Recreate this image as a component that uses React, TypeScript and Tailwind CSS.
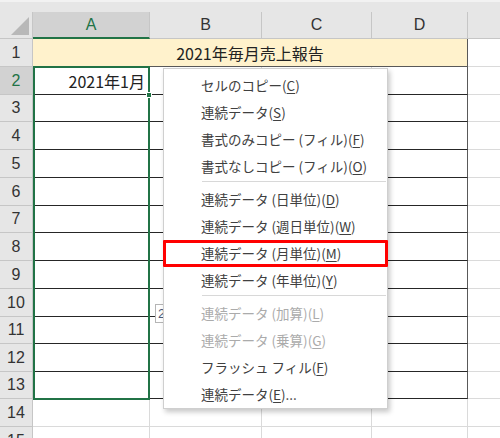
import React from "react";

const cols = [
  { label: "A", w: "w-[117px]" },
  { label: "B", w: "w-[112px]" },
  { label: "C", w: "w-[110px]" },
  { label: "D", w: "w-[96px]" },
  { label: "", w: "w-[65px]" },
];

// row heights as Excel draws them at 100% zoom
const rowHeights = [28, 28, 27, 28, 28, 28, 27, 28, 28, 28, 27, 28, 27, 28, 28];

type MenuEntry =
  | { kind: "sep" }
  | { kind: "item"; text: string; key: string; tail?: string; disabled?: boolean; marked?: boolean };

const menu: MenuEntry[] = [
  { kind: "item", text: "セルのコピー", key: "C" },
  { kind: "item", text: "連続データ", key: "S" },
  { kind: "item", text: "書式のみコピー (フィル)", key: "F" },
  { kind: "item", text: "書式なしコピー (フィル)", key: "O" },
  { kind: "sep" },
  { kind: "item", text: "連続データ (日単位)", key: "D" },
  { kind: "item", text: "連続データ (週日単位)", key: "W" },
  { kind: "item", text: "連続データ (月単位)", key: "M", marked: true },
  { kind: "item", text: "連続データ (年単位)", key: "Y" },
  { kind: "sep" },
  { kind: "item", text: "連続データ (加算)", key: "L", disabled: true },
  { kind: "item", text: "連続データ (乗算)", key: "G", disabled: true },
  { kind: "item", text: "フラッシュ フィル", key: "F" },
  { kind: "item", text: "連続データ", key: "E", tail: "..." },
];

const RowHeader = ({ n, h, active }: { n: number; h: number; active: boolean }) => (
  <div
    style={{ height: h }}
    className={`w-[33px] shrink-0 flex items-center justify-center border-r border-b border-[#c6c6c6] text-[16px] ${
      active ? "bg-[#d2d2d2] text-[#217346]" : "bg-[#e6e6e6] text-[#333]"
    }`}
  >
    {n}
  </div>
);

const SheetRow = ({ r, h }: { r: number; h: number }) => {
  if (r === 1) {
    return (
      <div className="flex">
        <RowHeader n={r} h={h} active={false} />
        <div
          style={{ height: h }}
          className="w-[435px] shrink-0 flex items-center justify-center bg-[#fff2cc] border-r border-b border-[#595959] text-[16px] text-[#222] font-['Noto_Sans_CJK_JP',sans-serif]"
        >
          2021年毎月売上報告
        </div>
        <div style={{ height: h }} className="w-[65px] shrink-0 border-b border-[#dadada]" />
      </div>
    );
  }
  const inTable = r >= 2 && r <= 13;
  return (
    <div className="flex">
      <RowHeader n={r} h={h} active={r === 2} />
      {cols.map((c, i) => {
        let cls = "border-r border-b border-[#dadada]";
        if (inTable && i < 4) {
          cls = `border-b border-b-[#262626] border-r ${i === 3 ? "border-r-[#595959]" : "border-r-[#dadada]"}`;
        }
        return (
          <div
            key={c.label + i}
            style={{ height: h }}
            className={`${c.w} shrink-0 flex items-center justify-end pr-[4px] ${cls}`}
          >
            {r === 2 && i === 0 && (
              <span className="text-[16px] text-[#222] font-['Noto_Sans_CJK_JP',sans-serif]">2021年1月</span>
            )}
          </div>
        );
      })}
    </div>
  );
};

const FillMenu = () => (
  <div className="absolute left-[163px] top-[68px] w-[225px] h-[341px] bg-white border border-[#cfcfcf] shadow-[2px_3px_5px_rgba(0,0,0,0.22)] pt-[3px] z-20 font-['Noto_Sans_CJK_JP',sans-serif] text-[13.5px]">
    {menu.map((m, i) =>
      m.kind === "sep" ? (
        <div key={i} className="h-[6px] flex items-start pt-[1px] pl-[38px] pr-[1px]">
          <div className="h-px w-full bg-[#d8d8d8]" />
        </div>
      ) : (
        <div
          key={i}
          className={`relative h-[27px] flex items-center pl-[37px] ${m.disabled ? "text-[#ababab]" : "text-[#404040]"}`}
        >
          <span>
            {m.text}(<span className="underline underline-offset-2">{m.key}</span>){m.tail}
          </span>
          {m.marked && (
            <div className="absolute -left-px -right-px top-0 bottom-0 border-[3px] border-[#ff0000] rounded-[1px]" />
          )}
        </div>
      )
    )}
  </div>
);

export default function App() {
  return (
    <div className="relative w-[500px] h-[438px] overflow-hidden bg-white font-['Liberation_Sans',sans-serif]">
      {/* strip left over from the formula bar */}
      <div className="h-[12px] bg-[#e6e6e6] border-t-[2px] border-[#f2f2f2]" />

      {/* column headers */}
      <div className="flex h-[27px]">
        <div className="relative w-[33px] shrink-0 bg-[#e6e6e6] border-r border-b border-[#c6c6c6]">
          <svg className="absolute right-[3px] bottom-[3px]" width="18" height="18" viewBox="0 0 18 18">
            <polygon points="18,0 18,18 0,18" fill="#b8b8b8" />
          </svg>
        </div>
        {cols.map((c, i) => (
          <div
            key={c.label + i}
            className={`${c.w} shrink-0 flex items-center justify-center text-[16px] border-r border-[#c6c6c6] ${
              i === 0
                ? "bg-[#d2d2d2] text-[#217346] border-b-2 border-b-[#217346]"
                : "bg-[#e6e6e6] text-[#333] border-b border-b-[#c6c6c6]"
            }`}
          >
            {c.label}
          </div>
        ))}
      </div>

      {rowHeights.map((h, idx) => (
        <SheetRow key={idx} r={idx + 1} h={h} />
      ))}

      {/* fill range A2:A13 */}
      <div className="absolute left-[33px] top-[66px] w-[117px] h-[334px] border-2 border-[#217346] z-10" />
      <div className="absolute left-[146px] top-[92px] w-[6px] h-[6px] bg-[#217346] border border-white z-10" />

      {/* auto fill preview tip, mostly behind the menu */}
      <div className="absolute left-[155px] top-[304px] h-[19px] px-[2px] bg-white border border-[#b5b5b5] flex items-center text-[13px] text-[#4a5a7a] z-10">
        2021年12月
      </div>

      <FillMenu />
    </div>
  );
}
